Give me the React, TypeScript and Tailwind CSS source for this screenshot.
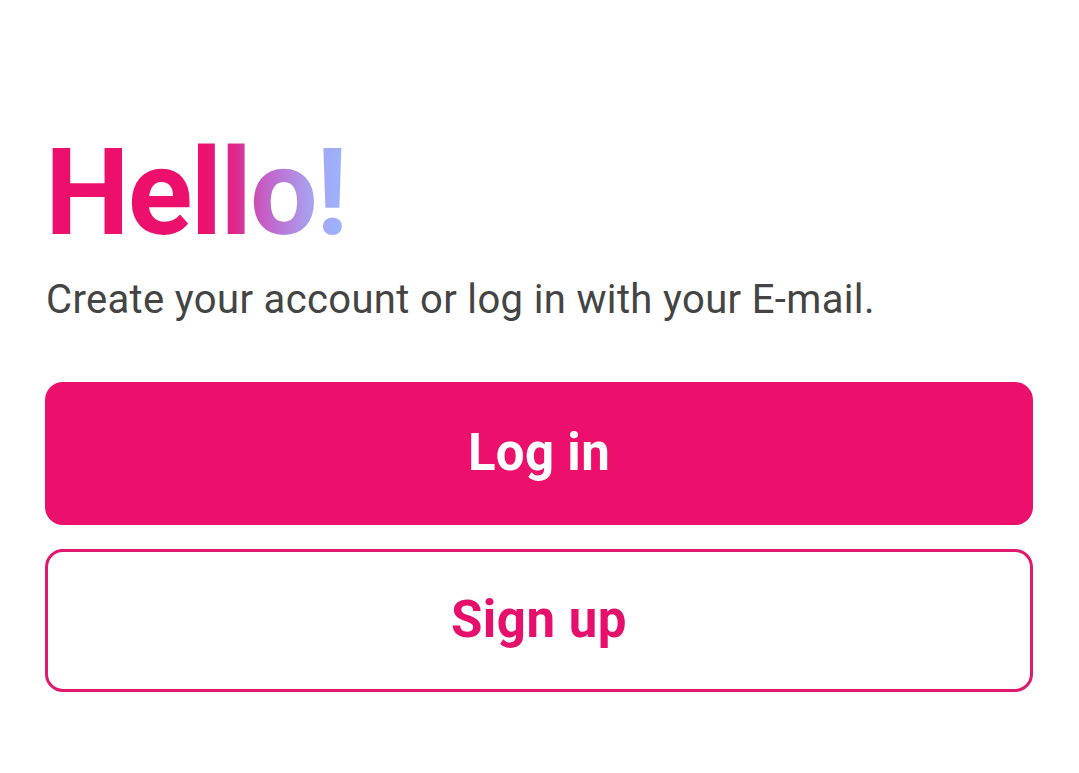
export default function App() {
  return (
    <div className="w-[1079px] h-[773px] bg-white font-['Roboto',sans-serif] px-[45px] pt-[128px]">
      <h1
        className="text-[120px] leading-[130px] font-bold tracking-[-2px] bg-[linear-gradient(90deg,#ec0f6b_0%,#ec0f6b_52%,#e0278a_63%,#c360c8_73%,#a9a0f0_88%,#99b6ff_100%)] bg-clip-text text-transparent inline-block"
      >
        Hello!
      </h1>
      <p className="mt-[20px] text-[40px] leading-[44px] tracking-[0.35px] text-[#444444] pl-[1px]">
        Create your account or log in with your E-mail.
      </p>
      <button className="mt-[60px] w-[988px] h-[143px] rounded-[18px] bg-[#ec0f6b] text-white text-[51px] tracking-[0.3px] font-bold flex items-center justify-center">
        Log in
      </button>
      <button className="mt-[24px] w-[988px] h-[143px] rounded-[18px] border-[3px] border-[#e0196f] bg-white text-[#e60f6c] text-[51px] tracking-[0.5px] font-bold flex items-center justify-center">
        Sign up
      </button>
    </div>
  );
}
